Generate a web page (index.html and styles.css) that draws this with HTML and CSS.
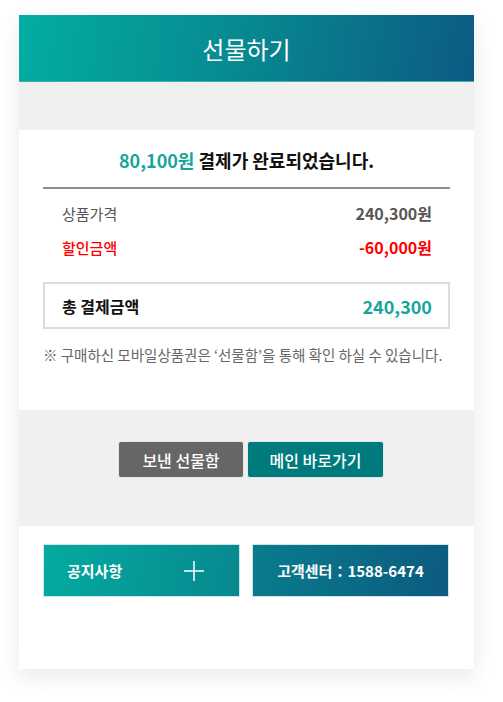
FILE: index.html
```html
<!DOCTYPE html>
<html>
  <head>
    <title>선물하기</title>
    <link rel="stylesheet" href="styles.css">
  </head>
  <body>
    <div class="card">
      <div class="header">
        <h1>선물하기</h1>
      </div>
      <div class="gap-band"></div>

      <div class="result">
        <h2 class="result-title"><span class="accent">80,100원</span> 결제가 완료되었습니다.</h2>
        <div class="row">
          <span>상품가격</span>
          <span class="value">240,300원</span>
        </div>
        <div class="row discount">
          <span>할인금액</span>
          <span class="value">-60,000원</span>
        </div>
        <div class="total">
          <span class="total-label">총 결제금액</span>
          <span class="total-value">240,300</span>
        </div>
        <p class="note">※ 구매하신 모바일상품권은 ‘선물함’을 통해 확인 하실 수 있습니다.</p>
      </div>

      <div class="actions">
        <button class="btn btn-gray">보낸 선물함</button>
        <button class="btn btn-teal">메인 바로가기</button>
      </div>

      <div class="footer">
        <a class="foot-btn notice">
          <span>공지사항</span>
          <svg width="22" height="22" viewBox="0 0 22 22">
            <path d="M11 1v20M1 11h20" stroke="#fff" stroke-width="1.5" fill="none" />
          </svg>
        </a>
        <a class="foot-btn center">고객센터：1588-6474</a>
      </div>
    </div>
  </body>
</html>
```

FILE: styles.css
```css
html,
body {
  margin: 0;
  padding: 0;
  background-color: #fff;
}
body {
  font-family: "Noto Sans CJK KR", "Noto Sans", sans-serif;
  padding: 15px 0 33px 19px;
}
.card {
  width: 455px;
  background-color: #fff;
  box-shadow: 0 8px 22px rgba(0, 0, 0, 0.09);
}
.header {
  height: 66px;
  display: flex;
  align-items: center;
  justify-content: center;
  background: linear-gradient(100deg, #03ada2 0%, #07888f 50%, #0d5a83 100%);
  border-bottom: 1px solid #3fb2b0;
}
.header h1 {
  margin: 0;
  font-size: 24px;
  font-weight: 400;
  color: #fff;
}
.gap-band {
  height: 48px;
  background-color: #f0f0f0;
}
.result {
  padding: 18px 24px 44px;
}
.result-title {
  margin: 0;
  text-align: center;
  font-size: 18px;
  font-weight: 700;
  line-height: 24px;
  color: #111;
  padding-bottom: 15px;
  border-bottom: 2px solid #8c8c8c;
}
.accent {
  color: #17a59a;
}
.row {
  display: flex;
  justify-content: space-between;
  align-items: center;
  padding: 0 18px 0 19px;
  height: 34px;
  font-size: 15px;
  color: #555;
}
.result-title + .row {
  margin-top: 7px;
}
.row .value {
  font-size: 16px;
  font-weight: 700;
}
.discount {
  color: #ff0000;
  font-weight: 500;
}
.total {
  margin-top: 18px;
  height: 43px;
  border: 2px solid #dcdcdc;
  display: flex;
  align-items: center;
  justify-content: space-between;
  padding: 0 16px 0 17px;
}
.total-label {
  font-size: 16px;
  font-weight: 700;
  color: #111;
}
.total-value {
  font-size: 18px;
  font-weight: 700;
  color: #17a59a;
}
.note {
  margin: 15px 0 0;
  font-size: 14.5px;
  line-height: 22px;
  color: #666;
}
.actions {
  background-color: #f0f0f0;
  padding: 31px 0 48px 9px;
  display: flex;
  justify-content: center;
  gap: 3px;
}
.btn {
  height: 37px;
  border: 1px solid #e6e6e6;
  border-radius: 3px;
  font-family: inherit;
  font-size: 16px;
  font-weight: 500;
  color: #fff;
  padding: 0;
}
.btn-gray {
  width: 126px;
  background-color: #666;
}
.btn-teal {
  width: 137px;
  background-color: #007b7d;
}
.footer {
  padding: 18px 24px 72px 24px;
  display: flex;
  gap: 12px;
}
.foot-btn {
  width: 197px;
  flex: none;
  height: 53px;
  display: flex;
  align-items: center;
  font-size: 15px;
  font-weight: 700;
  color: #fff;
  white-space: nowrap;
  box-sizing: border-box;
  border: 1px solid #cde6ea;
}
.notice {
  justify-content: space-between;
  padding: 0 34px 0 23px;
  background: linear-gradient(100deg, #04aaa0 0%, #07888f 100%);
}
.center {
  justify-content: center;
  background: linear-gradient(100deg, #097c8c 0%, #0c5b80 100%);
}
```
